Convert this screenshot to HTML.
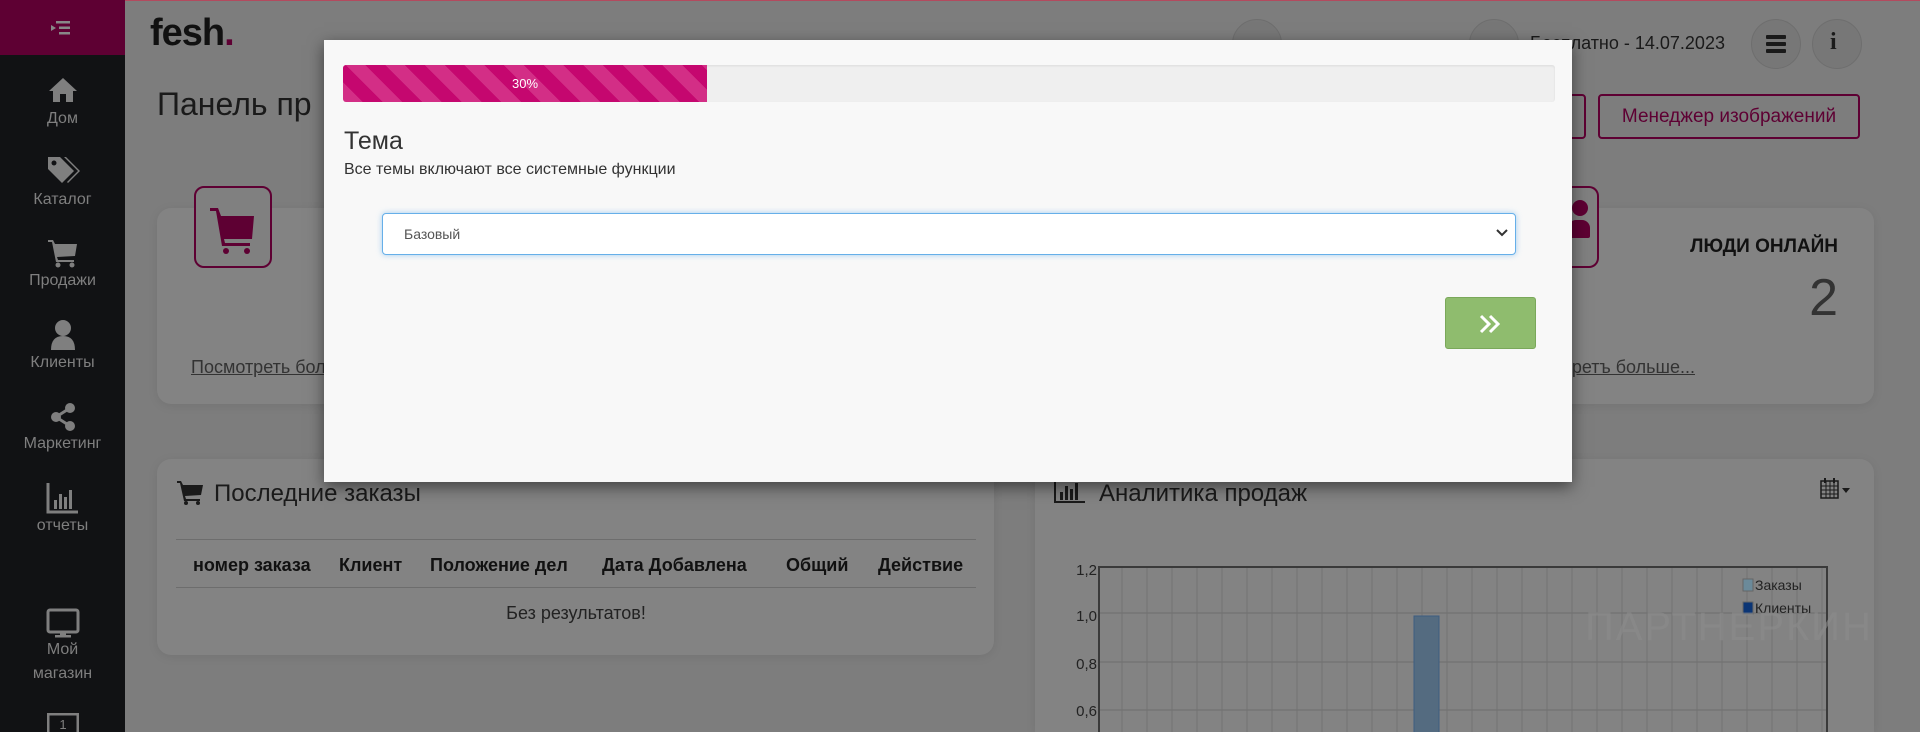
<!DOCTYPE html>
<html style="overflow:hidden;height:732px"><head><meta charset="utf-8"><style>
*{box-sizing:border-box;margin:0;padding:0}
html,body{overflow:hidden}
body{width:1920px;height:732px;background:#7d7d7d;font-family:"Liberation Sans",sans-serif;position:relative;color:#1a1a1a}
.a{position:absolute}
.side{left:0;top:0;width:125px;height:732px;background:#111214}
.sidetop{left:0;top:0;width:125px;height:55px;background:#5e0033}
.si{width:125px;text-align:center;color:#7f7f7f;font-size:16px}
.card{background:#838383;border-radius:14px;box-shadow:0 2px 10px rgba(0,0,0,.08)}
.circ{width:50px;height:50px;border-radius:50%;background:#777;border:1px solid #6e6e6e}
.mbtn{border:2px solid #5e0033;border-radius:4px;color:#5e0033;font-size:19px;text-align:center}
.modal{left:324px;top:40px;width:1248px;height:442px;background:#f8f8f8;box-shadow:0 5px 15px rgba(0,0,0,.5)}
</style></head><body>
<div class="a" style="left:0;top:0;width:1920px;height:1px;background:#b34a5e"></div>
<div class="a side"></div>
<div class="a sidetop"></div>
<svg class="a" style="left:50px;top:20px" width="22" height="16"><rect x="6" y="1" width="14" height="2.5" fill="#888"/><rect x="9" y="6.5" width="11" height="2.5" fill="#888"/><rect x="9" y="12" width="11" height="2.5" fill="#888"/><path d="M1 5 L6 8 L1 11Z" fill="#888"/></svg>
<svg class="a" style="left:47px;top:76px" width="32" height="28"><path d="M16 2 L30 15 L26 15 L26 26 L19 26 L19 18 L13 18 L13 26 L6 26 L6 15 L2 15Z" fill="#7f7f7f"/></svg>
<div class="a si" style="top:110px">Дом</div>
<svg class="a" style="left:46px;top:155px" width="36" height="34"><path d="M2 2 L14 2 L28 16 L16 28 L2 14Z" fill="#7f7f7f"/><path d="M18 2 L20 2 L34 16 L22 28 L21 27 L32 16Z" fill="#7f7f7f"/><circle cx="8" cy="8" r="2.5" fill="#111214"/></svg>
<div class="a si" style="top:191px">Каталог</div>
<svg class="a" style="left:47px;top:238px" width="32" height="30"><path d="M1 2 L6 2 L8 6 L30 6 L28 18 L10 19 L11 22 L27 22 L27 24 L9 24 L5 4 L1 4Z" fill="#7f7f7f"/><circle cx="11" cy="27" r="2.5" fill="#7f7f7f"/><circle cx="25" cy="27" r="2.5" fill="#7f7f7f"/></svg>
<div class="a si" style="top:272px">Продажи</div>
<svg class="a" style="left:49px;top:319px" width="28" height="32"><circle cx="14" cy="9" r="8" fill="#7f7f7f"/><path d="M2 31 Q2 17 14 17 Q26 17 26 31Z" fill="#7f7f7f"/></svg>
<div class="a si" style="top:354px">Клиенты</div>
<svg class="a" style="left:50px;top:402px" width="26" height="30"><circle cx="6" cy="15" r="5" fill="#7f7f7f"/><circle cx="20" cy="6" r="5" fill="#7f7f7f"/><circle cx="20" cy="24" r="5" fill="#7f7f7f"/><path d="M6 15 L20 6 M6 15 L20 24" stroke="#7f7f7f" stroke-width="3"/></svg>
<div class="a si" style="top:435px">Маркетинг</div>
<svg class="a" style="left:46px;top:482px" width="34" height="32"><path d="M2 1 L2 30 L32 30" stroke="#7f7f7f" stroke-width="3" fill="none"/><rect x="8" y="18" width="3" height="9" fill="#7f7f7f"/><rect x="13" y="12" width="3" height="15" fill="#7f7f7f"/><rect x="18" y="15" width="3" height="12" fill="#7f7f7f"/><rect x="23" y="8" width="3" height="19" fill="#7f7f7f"/></svg>
<div class="a si" style="top:517px">отчеты</div>
<svg class="a" style="left:46px;top:608px" width="34" height="30"><rect x="2" y="2" width="30" height="22" rx="2" stroke="#7f7f7f" stroke-width="3" fill="none"/><rect x="14" y="24" width="6" height="4" fill="#7f7f7f"/><rect x="9" y="27" width="16" height="2.5" fill="#7f7f7f"/></svg>
<div class="a si" style="top:641px">Мой</div>
<div class="a si" style="top:665px">магазин</div>
<svg class="a" style="left:47px;top:713px" width="32" height="19"><rect x="1" y="1" width="30" height="20" stroke="#7f7f7f" stroke-width="3" fill="none"/><text x="16" y="16" font-size="13" fill="#7f7f7f" text-anchor="middle" font-family="Liberation Sans">1</text></svg>

<div class="a" style="left:150px;top:12px;font-size:38px;font-weight:bold;color:#111;letter-spacing:-1px">fesh<span style="color:#5e0033">.</span></div>
<div class="a" style="left:157px;top:86px;font-size:32px;color:#1a1a1a">Панель пр</div>
<div class="a circ" style="left:1232px;top:19px"></div>
<div class="a circ" style="left:1469px;top:19px"></div>
<div class="a" style="left:1530px;top:33px;font-size:18px;color:#1a1a1a">Бесплатно - 14.07.2023</div>
<div class="a circ" style="left:1751px;top:19px"></div>
<svg class="a" style="left:1764px;top:34px" width="24" height="20"><rect x="2" y="1" width="20" height="4" rx="1" fill="#1a1a1a"/><rect x="2" y="8" width="20" height="4" rx="1" fill="#1a1a1a"/><rect x="2" y="15" width="20" height="4" rx="1" fill="#1a1a1a"/></svg>
<div class="a circ" style="left:1812px;top:19px"></div>
<div class="a" style="left:1830px;top:29px;font-size:24px;font-weight:bold;font-family:'Liberation Serif',serif;color:#1a1a1a">i</div>
<div class="a mbtn" style="left:1520px;top:94px;width:66px;height:45px"></div>
<div class="a mbtn" style="left:1598px;top:94px;width:262px;height:45px;line-height:41px">Менеджер изображений</div>

<div class="a card" style="left:157px;top:208px;width:1717px;height:196px"></div>
<div class="a" style="left:194px;top:186px;width:78px;height:82px;border:2px solid #5e0033;border-radius:10px;background:#808080"></div>
<svg class="a" style="left:208px;top:204px" width="52" height="50"><path d="M2 4 L10 4 L13 12 L46 12 L44 35 L16 35 L17 39 L42 39 L42 42 L14 42 L8 7 L2 7Z" fill="#5e0033"/><circle cx="18" cy="47" r="3" fill="#5e0033"/><circle cx="39" cy="47" r="3" fill="#5e0033"/></svg>
<div class="a" style="left:1534px;top:186px;width:65px;height:82px;border:2px solid #5e0033;border-left:none;border-radius:0 10px 10px 0;background:#808080"></div>
<div class="a" style="left:1572px;top:200px;width:16px;height:16px;border-radius:50%;background:#5e0033"></div>
<div class="a" style="left:1568px;top:220px;width:22px;height:18px;border-radius:8px 8px 2px 2px;background:#5e0033"></div>
<div class="a" style="left:1660px;top:236px;width:178px;text-align:right;font-size:19px;font-weight:bold;color:#111">ЛЮДИ ОНЛАЙН</div>
<div class="a" style="left:1760px;top:268px;width:78px;text-align:right;font-size:52px;color:#333">2</div>
<div class="a" style="left:191px;top:357px;font-size:18px;color:#333;text-decoration:underline">Посмотреть больше...</div>
<div class="a" style="left:1560px;top:357px;font-size:18px;color:#333;text-decoration:underline;width:135px;text-align:right">ретъ больше...</div>

<div class="a card" style="left:157px;top:459px;width:837px;height:196px"></div>
<svg class="a" style="left:176px;top:479px" width="28" height="26"><path d="M1 2 L5 2 L7 6 L27 6 L25 16 L9 17 L10 20 L24 20 L24 22 L8 22 L4 4 L1 4Z" fill="#1a1a1a"/><circle cx="10" cy="24" r="2" fill="#1a1a1a"/><circle cx="22" cy="24" r="2" fill="#1a1a1a"/></svg>
<div class="a" style="left:214px;top:480px;font-size:24px;color:#1a1a1a">Последние заказы</div>
<div class="a" style="left:176px;top:539px;width:800px;height:1px;background:#6d6d6d"></div>
<div class="a" style="left:193px;top:555px;font-size:18px;font-weight:bold;color:#111">номер заказа</div>
<div class="a" style="left:339px;top:555px;font-size:18px;font-weight:bold;color:#111">Клиент</div>
<div class="a" style="left:430px;top:555px;font-size:18px;font-weight:bold;color:#111">Положение дел</div>
<div class="a" style="left:602px;top:555px;font-size:18px;font-weight:bold;color:#111">Дата Добавлена</div>
<div class="a" style="left:786px;top:555px;font-size:18px;font-weight:bold;color:#111">Общий</div>
<div class="a" style="left:878px;top:555px;font-size:18px;font-weight:bold;color:#111">Действие</div>
<div class="a" style="left:176px;top:587px;width:800px;height:1px;background:#6d6d6d"></div>
<div class="a" style="left:176px;top:603px;width:800px;text-align:center;font-size:18px;color:#222">Без результатов!</div>

<div class="a card" style="left:1035px;top:459px;width:839px;height:273px;border-radius:14px 14px 0 0"></div>
<svg class="a" style="left:1054px;top:480px" width="32" height="24"><path d="M1 1 L1 22 L31 22" stroke="#1a1a1a" stroke-width="2" fill="none"/><rect x="6" y="12" width="3" height="8" fill="#1a1a1a"/><rect x="11" y="6" width="3" height="14" fill="#1a1a1a"/><rect x="16" y="9" width="3" height="11" fill="#1a1a1a"/><rect x="21" y="3" width="3" height="17" fill="#1a1a1a"/></svg>
<div class="a" style="left:1099px;top:480px;font-size:24px;color:#1a1a1a">Аналитика продаж</div>
<svg class="a" style="left:1820px;top:478px" width="34" height="22"><rect x="1" y="3" width="17" height="17" fill="none" stroke="#1a1a1a" stroke-width="1.5"/><path d="M1 8 H18 M1 12 H18 M1 16 H18 M6 3 V20 M10 3 V20 M14 3 V20" stroke="#1a1a1a" stroke-width="1"/><rect x="4" y="0" width="2" height="5" fill="#1a1a1a"/><rect x="13" y="0" width="2" height="5" fill="#1a1a1a"/><path d="M22 10 L30 10 L26 15Z" fill="#1a1a1a"/></svg>
<svg class="a" style="left:1060px;top:555px" width="800" height="177">
<g stroke="#6c6c6c" stroke-width="1"><path d="M40 58 H767 M40 107 H767 M40 155 H767"/></g>
<g stroke="#737373" stroke-width="1">
<path d="M62 12V180 M87 12V180 M112 12V180 M137 12V180 M162 12V180 M187 12V180 M212 12V180 M237 12V180 M262 12V180 M287 12V180 M312 12V180 M337 12V180 M362 12V180 M387 12V180 M412 12V180 M437 12V180 M462 12V180 M487 12V180 M512 12V180 M537 12V180 M562 12V180 M587 12V180 M612 12V180 M637 12V180 M662 12V180 M687 12V180 M712 12V180 M737 12V180 M762 12V180"/>
</g>
<rect x="39" y="12" width="728" height="180" fill="none" stroke="#3a3a3a" stroke-width="2"/>
<rect x="354" y="61" width="25" height="130" fill="#546b80" stroke="#3d5c80"/>
<rect x="683" y="24" width="10" height="12" fill="#6b8a9a" stroke="#666"/>
<rect x="683" y="47" width="10" height="12" fill="#0b3575" stroke="#666"/>
<text x="695" y="35" font-size="14" fill="#222" font-family="Liberation Sans">Заказы</text>
<text x="695" y="58" font-size="14" fill="#222" font-family="Liberation Sans">Клиенты</text>
<g font-size="15" fill="#222" font-family="Liberation Sans" text-anchor="end">
<text x="37" y="20">1,2</text><text x="37" y="66">1,0</text><text x="37" y="114">0,8</text><text x="37" y="161">0,6</text>
</g>
</svg>
<div class="a" style="left:1585px;top:605px;font-size:40px;color:rgba(140,140,140,.6);letter-spacing:2px">ПАРТНЕРКИН</div>

<div class="a modal"></div>
<div class="a" style="left:343px;top:65px;width:1212px;height:37px;background:#efefef;border-radius:3px;box-shadow:inset 0 1px 2px rgba(0,0,0,.08)"></div>
<div class="a" style="left:343px;top:65px;width:364px;height:37px;background:repeating-linear-gradient(45deg,#d32e86 0 14px,#c5076f 14px 28px);border-radius:3px 0 0 3px;color:#fff;font-size:13px;text-align:center;line-height:37px">30%</div>
<div class="a" style="left:344px;top:127px;font-size:25px;color:#333">Тема</div>
<div class="a" style="left:344px;top:161px;font-size:16px;color:#333">Все темы включают все системные функции</div>
<div class="a" style="left:382px;top:213px;width:1134px;height:42px;background:#fff;border:1px solid #66afe9;border-radius:4px;box-shadow:0 0 6px rgba(102,175,233,.6);font-size:14px;color:#555;padding-left:21px;line-height:40px">Базовый</div>
<svg class="a" style="left:1496px;top:228px" width="12" height="10"><path d="M1 2 L6 7 L11 2" stroke="#333" stroke-width="2" fill="none"/></svg>
<div class="a" style="left:1445px;top:297px;width:91px;height:52px;background:#8fbc6e;border:1px solid #7aa85a;border-radius:3px"></div>
<svg class="a" style="left:1478px;top:313px" width="26" height="22"><path d="M3 3 L11 11 L3 19 M12 3 L20 11 L12 19" stroke="#fff" stroke-width="3" fill="none"/></svg>
</body></html>
